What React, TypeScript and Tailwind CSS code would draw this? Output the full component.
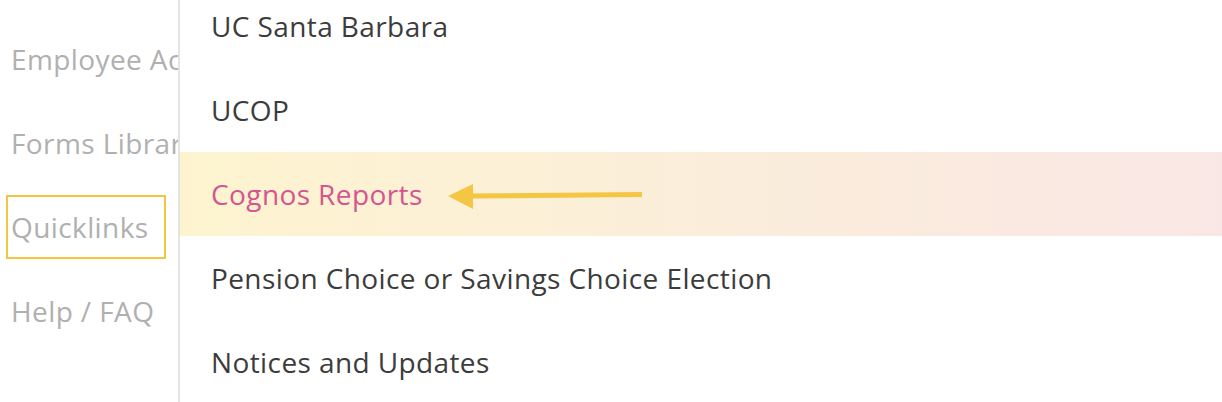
import React from "react";

const sideItems = ["Employee Actions", "Forms Library", "Quicklinks", "Help / FAQ"];

const links = [
  { id: 1, title: "UC Santa Barbara" },
  { id: 2, title: "UCOP" },
  { id: 3, title: "Cognos Reports", active: true },
  { id: 4, title: "Pension Choice or Savings Choice Election" },
  { id: 5, title: "Notices and Updates" },
];

const Arrow = () => (
  <svg
    className="absolute left-[266px] top-[30px]"
    width="200"
    height="30"
    viewBox="0 0 200 30"
  >
    <line x1="22" y1="14" x2="196" y2="12.5" stroke="#f5c544" strokeWidth="5" />
    <polygon points="2,14 27,2 27,27" fill="#f5c544" />
  </svg>
);

export default function App() {
  return (
    <div className="flex h-[402px] w-[1222px] overflow-hidden bg-white font-['Open_Sans',sans-serif] text-[28px] tracking-[0.4px]">
      <div className="flex w-[180px] shrink-0 flex-col overflow-hidden border-r-2 border-[#e4e4e4] pt-[17px]">
        {sideItems.map((item) =>
          item === "Quicklinks" ? (
            <div key={item} className="flex h-[84px] items-center">
              <div className="ml-[6px] flex h-[64px] w-[160px] items-center whitespace-nowrap border-2 border-[#f5c542] pl-[3px] text-[#b0b0b0]">
                {item}
              </div>
            </div>
          ) : (
            <div
              key={item}
              className="flex h-[84px] items-center whitespace-nowrap pl-[11px] text-[#b0b0b0]"
            >
              {item}
            </div>
          )
        )}
      </div>
      <div className="-mt-4 flex flex-1 flex-col">
        {links.map((link) => (
          <div
            key={link.id}
            className={
              link.active
                ? "relative flex h-[84px] shrink-0 items-center bg-gradient-to-r from-[#fdf4cf] to-[#f9e7e5] pl-[31px] text-[#d6548f]"
                : "flex h-[84px] shrink-0 items-center pl-[31px] text-[#3c3c3c]"
            }
          >
            {link.title}
            {link.active && <Arrow />}
          </div>
        ))}
      </div>
    </div>
  );
}
